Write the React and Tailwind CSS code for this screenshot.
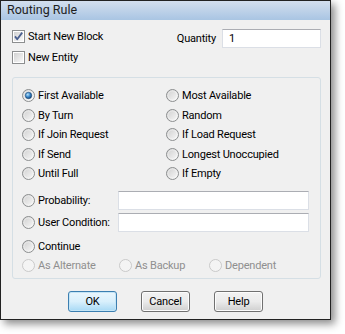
import React from "react";

const FONT = { fontFamily: 'Roboto, "Liberation Sans", sans-serif' };

function Radio({ checked = false, disabled = false }) {
  return (
    <svg width="13" height="13" viewBox="0 0 13 13" className="shrink-0">
      <defs>
        <linearGradient id="rbg" x1="0" y1="0" x2="1" y2="1">
          <stop offset="0" stopColor="#cdcdcd" />
          <stop offset="1" stopColor="#fbfbfb" />
        </linearGradient>
        <radialGradient id="rdot" cx="0.38" cy="0.35" r="0.7">
          <stop offset="0" stopColor="#b9e4fb" />
          <stop offset="0.55" stopColor="#3583c8" />
          <stop offset="1" stopColor="#143f6c" />
        </radialGradient>
      </defs>
      {disabled ? (
        <circle cx="6.5" cy="6.5" r="6" fill="#f4f4f4" stroke="#c9c9c9" />
      ) : (
        <>
          <circle cx="6.5" cy="6.5" r="6" fill="url(#rbg)" stroke="#8c8e8f" />
          <circle cx="6.5" cy="6.5" r="4.6" fill="none" stroke="#ffffff" strokeOpacity="0.5" strokeWidth="0.8" />
        </>
      )}
      {checked && <circle cx="6.5" cy="6.5" r="3.2" fill="url(#rdot)" stroke="#1d4a78" strokeWidth="0.6" />}
    </svg>
  );
}

function Checkbox({ checked = false }) {
  return (
    <svg width="13" height="13" viewBox="0 0 13 13" className="shrink-0">
      <defs>
        <linearGradient id="cbg" x1="0" y1="0" x2="1" y2="1">
          <stop offset="0" stopColor="#d2d2d2" />
          <stop offset="1" stopColor="#f8f8f8" />
        </linearGradient>
      </defs>
      <rect x="0.5" y="0.5" width="12" height="12" fill="#ffffff" stroke="#8c8e8f" />
      <rect x="2" y="2" width="9" height="9" fill="url(#cbg)" />
      {checked && (
        <path d="M3 6.4 L5.2 9.3 L10.2 2.6" fill="none" stroke="#4a5f8f" strokeWidth="1.8" strokeLinejoin="round" />
      )}
    </svg>
  );
}

function RadioLabel({ label, checked, disabled, className = "" }) {
  return (
    <div className={`flex items-center gap-[3px] h-[19.5px] whitespace-nowrap ${className}`}>
      <Radio checked={checked} disabled={disabled} />
      <span className={disabled ? "text-[#8f8f8f]" : "text-black"}>{label}</span>
    </div>
  );
}

function Button({ children, primary }) {
  return (
    <div
      className={
        primary
          ? "w-[49px] h-[21px] rounded-[3px] border border-[#3c7fb1] bg-gradient-to-b from-[#eaf6fd] via-[#d9f0fc] to-[#a7d9f5] flex items-center justify-center shadow-[inset_0_0_0_1px_#c4e5f6]"
          : "w-[49px] h-[21px] rounded-[3px] border border-[#707070] bg-gradient-to-b from-[#f2f2f2] via-[#ebebeb] to-[#cfcfcf] flex items-center justify-center shadow-[inset_0_0_0_1px_#fcfcfc]"
      }
    >
      {children}
    </div>
  );
}

export default function App() {
  return (
    <div className="w-[345px] h-[334px] bg-white text-[11px] tracking-[-0.2px] leading-none text-black" style={FONT}>
      <div className="w-[331px] h-[320px] border border-[#222] bg-[#f0f0f0] flex flex-col shadow-[4px_4px_8px_rgba(0,0,0,0.45)]">
        <div className="h-[19px] bg-gradient-to-b from-[#d3dfee] to-[#a9c5e3] flex items-center pl-[6px] text-[#1e1e1e] text-[12.5px] tracking-normal">
          Routing Rule
        </div>
        <div className="flex flex-col pl-[11px] pt-[8px]">
          <div className="flex justify-between pr-[9px]">
            <div className="flex flex-col gap-[4px]">
              <div className="flex items-center gap-[3px] h-[17px]">
                <Checkbox checked />
                <span>Start New Block</span>
              </div>
              <div className="flex items-center gap-[3px] h-[17px]">
                <Checkbox />
                <span>New Entity</span>
              </div>
            </div>
            <div className="flex items-center h-[19px] mt-[1px] gap-[6px]">
              <span>Quantity</span>
              <div className="w-[99px] h-[19px] bg-white border border-[#dbdfe6] border-t-[#abadb3] flex items-center pl-[6px]">
                1
              </div>
            </div>
          </div>
          <div className="mt-[11px] w-[309px] border border-[#d5dfe5] rounded-[3px] pl-[9px] pt-[8px] pb-[2px] flex flex-col">
            <div className="grid grid-cols-[144px_1fr]">
              <RadioLabel label="First Available" checked />
              <RadioLabel label="Most Available" />
              <RadioLabel label="By Turn" />
              <RadioLabel label="Random" />
              <RadioLabel label="If Join Request" />
              <RadioLabel label="If Load Request" />
              <RadioLabel label="If Send" />
              <RadioLabel label="Longest Unoccupied" />
              <RadioLabel label="Until Full" />
              <RadioLabel label="If Empty" />
            </div>
            <div className="flex items-center mt-[7px] h-[19px]">
              <RadioLabel label="Probability:" className="w-[96px]" />
              <div className="w-[191px] h-[19px] bg-white border border-[#dbdfe6] border-t-[#abadb3]" />
            </div>
            <div className="flex items-center mt-[3px] h-[19px]">
              <RadioLabel label="User Condition:" className="w-[96px]" />
              <div className="w-[191px] h-[19px] bg-white border border-[#dbdfe6] border-t-[#abadb3]" />
            </div>
            <div className="mt-[5px]">
              <RadioLabel label="Continue" />
            </div>
            <div className="flex">
              <RadioLabel label="As Alternate" disabled className="w-[97px]" />
              <RadioLabel label="As Backup" disabled className="w-[90px]" />
              <RadioLabel label="Dependent" disabled />
            </div>
          </div>
        </div>
        <div className="flex justify-center gap-[24px] mt-[12px]">
          <Button primary>OK</Button>
          <Button>Cancel</Button>
          <Button>Help</Button>
        </div>
      </div>
    </div>
  );
}
